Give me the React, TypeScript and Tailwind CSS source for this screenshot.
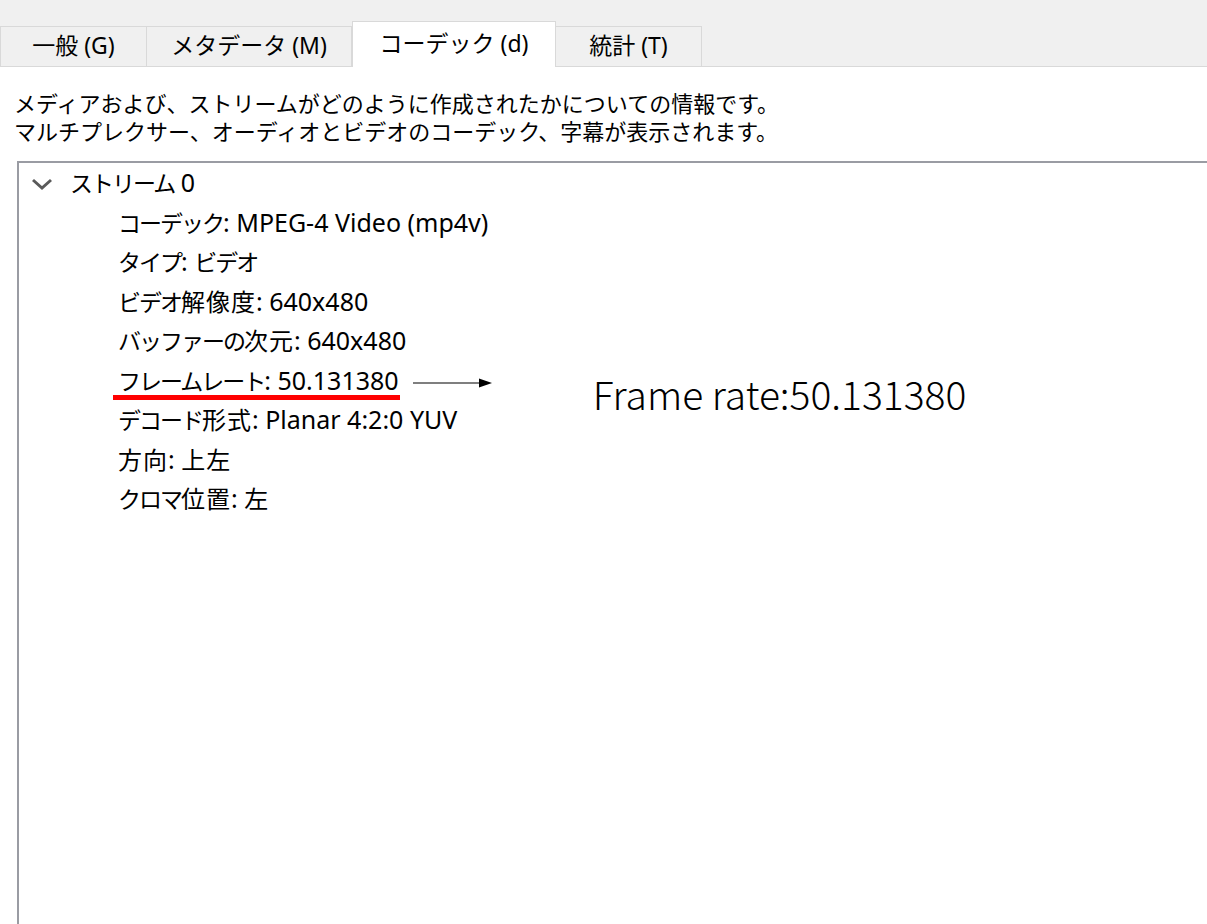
import React from "react";

const UI_FONT = "font-['Noto_Sans','Noto_Sans_CJK_JP',sans-serif]";

const tabs = [
  { label: "一般 (G)", width: "w-[147px]" },
  { label: "メタデータ (M)", width: "w-[206px]" },
  { label: "コーデック (d)", width: "w-[204px]", active: true },
  { label: "統計 (T)", width: "w-[147px]" },
];

const items = [
  "コーデック: MPEG-4 Video (mp4v)",
  "タイプ: ビデオ",
  "ビデオ解像度: 640x480",
  "バッファーの次元: 640x480",
  "フレームレート: 50.131380",
  "デコード形式: Planar 4:2:0 YUV",
  "方向: 上左",
  "クロマ位置: 左",
];

const KANA = /^[\u3040-\u30ff]+$/;
const KANJI = /^[\u4e00-\u9fff]+$/;

const Mixed: React.FC<{ text: string }> = ({ text }) => {
  const parts = text.split(/([\u3040-\u30ff]+|[\u4e00-\u9fff]+)/).filter(Boolean);
  return (
    <>
      {parts.map((p, i) =>
        KANA.test(p) ? (
          <span key={i} className="text-[23px] tracking-[-2px]">{p}</span>
        ) : KANJI.test(p) ? (
          <span key={i} className="text-[24px] tracking-[1px]">{p}</span>
        ) : (
          <span key={i} className="text-[25px]">{p}</span>
        )
      )}
    </>
  );
};

const Chevron: React.FC = () => (
  <svg width="22" height="14" viewBox="0 0 22 14" className="shrink-0">
    <polyline points="2,3 11,11 20,3" fill="none" stroke="#5a5a5a" strokeWidth="3" />
  </svg>
);

const Arrow: React.FC = () => (
  <svg width="80" height="12" viewBox="0 0 80 12" className="shrink-0">
    <line x1="0" y1="6" x2="68" y2="6" stroke="#000" strokeWidth="1.2" />
    <polygon points="66,1.5 79,6 66,10.5" fill="#000" />
  </svg>
);

export default function App() {
  return (
    <div className={`w-[1207px] h-[924px] bg-white overflow-hidden flex flex-col text-black ${UI_FONT}`}>
      {/* Tab strip */}
      <div className="h-[67px] shrink-0 bg-[#f0f0f0] border-b border-[#d9d9d9] flex items-end">
        {tabs.map((t) =>
          t.active ? (
            <div
              key={t.label}
              className={`${t.width} h-[46px] -mb-px bg-white border border-b-0 border-[#d9d9d9] flex items-center justify-center text-[23px] pb-[2px]`}
            >
              {t.label}
            </div>
          ) : (
            <div
              key={t.label}
              className={`${t.width} h-[40px] border border-b-0 border-[#d9d9d9] -ml-px first:ml-0 flex items-center justify-center text-[23px] pb-[2px]`}
            >
              {t.label}
            </div>
          )
        )}
      </div>

      {/* Description */}
      <div className="pl-[14px] pt-[22px] text-[22px] leading-[28px]">
        <p>メディアおよび、ストリームがどのように作成されたかについての情報です。</p>
        <p>マルチプレクサー、オーディオとビデオのコーデック、字幕が表示されます。</p>
      </div>

      {/* Tree view */}
      <div className="mt-[16px] ml-[17px] flex-1 border-l-2 border-t-2 border-[#9a9ca3] pt-[1px]">
        <div className="flex items-center h-[40px] pl-[12px]">
          <Chevron />
          <span className="ml-[17px] leading-[30px] whitespace-nowrap">
            <Mixed text="ストリーム 0" />
          </span>
        </div>
        {items.map((it, i) => (
          <div key={it} className="flex items-center h-[39.5px] pl-[99px]">
            {i === 4 ? (
              <>
                <span className="relative leading-[30px] whitespace-nowrap">
                  <Mixed text={it} />
                  <span className="absolute left-[-5px] right-[-1px] top-[30px] h-[5px] bg-[#ff0000]" />
                </span>
                <span className="ml-[14px] mt-[2px] flex">
                  <Arrow />
                </span>
                <span className="ml-[100px] relative top-[11px] text-[39px] leading-[44px] font-['Noto_Sans_CJK_JP','Noto_Sans',sans-serif] font-light whitespace-nowrap">
                  Frame rate:50.131380
                </span>
              </>
            ) : (
              <span className="leading-[30px] whitespace-nowrap">
                <Mixed text={it} />
              </span>
            )}
          </div>
        ))}
      </div>
    </div>
  );
}
